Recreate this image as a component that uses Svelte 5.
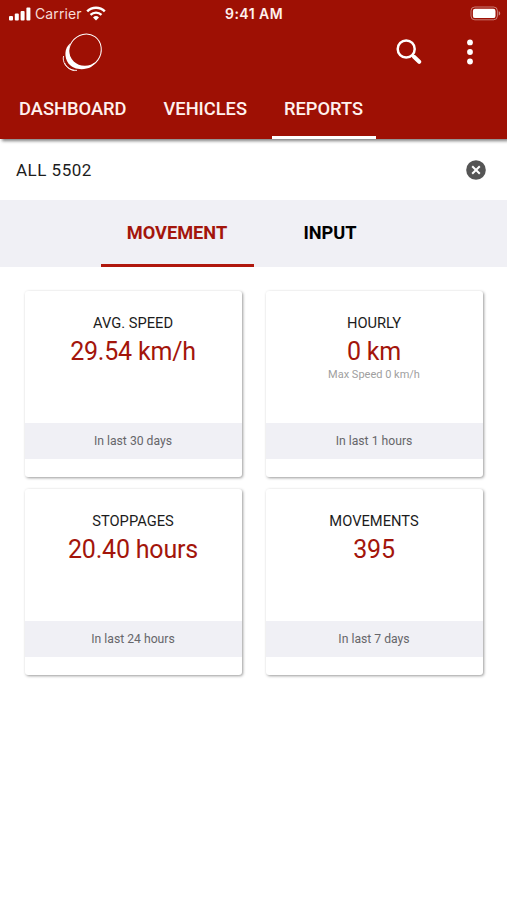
<script lang="ts">
    type Card = {
        title: string;
        value: string;
        note?: string;
        period: string;
    };

    const tabs: string[] = ['DASHBOARD', 'VEHICLES', 'REPORTS'];
    const sections: string[] = ['MOVEMENT', 'INPUT'];

    const cards: Card[] = [
        { title: 'AVG. SPEED', value: '29.54 km/h', period: 'In last 30 days' },
        { title: 'HOURLY', value: '0 km', note: 'Max Speed 0 km/h', period: 'In last 1 hours' },
        { title: 'STOPPAGES', value: '20.40 hours', period: 'In last 24 hours' },
        { title: 'MOVEMENTS', value: '395', period: 'In last 7 days' }
    ];

    let activeTab = $state('REPORTS');
    let activeSection = $state('MOVEMENT');
    let filter = $state('ALL 5502');
</script>

<div class="screen">
    <header>
        <div class="status-bar">
            <div class="carrier">
                <svg width="22" height="14" viewBox="0 0 22 14" fill="#fff">
                    <rect x="0" y="9" width="4" height="4.5" rx="1" />
                    <rect x="5.8" y="6.6" width="4" height="6.9" rx="1" />
                    <rect x="11.6" y="3.9" width="4" height="9.6" rx="1" />
                    <rect x="17.4" y="0.6" width="4" height="12.9" rx="1" />
                </svg>
                <span>Carrier</span>
                <svg width="20" height="15" viewBox="0 0 20 15" fill="none" stroke="#fff">
                    <path d="M1.2 5.4a12.6 12.6 0 0 1 17.6 0" stroke-width="2.5" />
                    <path d="M4.5 8.8a7.9 7.9 0 0 1 11 0" stroke-width="2.3" />
                    <path d="M10 14.4l-3-3a4.3 4.3 0 0 1 6 0z" fill="#fff" stroke="none" />
                </svg>
            </div>
            <span class="time">9:41 AM</span>
            <svg class="battery" width="31" height="15" viewBox="0 0 31 15">
                <rect x="1" y="1" width="26.4" height="12.8" rx="3.8" fill="none" stroke="#fff" stroke-opacity="0.45" />
                <rect x="2.9" y="2.7" width="22.6" height="9.4" rx="2.2" fill="#fff" />
                <path d="M28.7 5.2v4.4c.9-.3 1.5-1.2 1.5-2.2s-.6-1.9-1.5-2.2z" fill="#fff" fill-opacity="0.5" />
            </svg>
        </div>

        <div class="toolbar">
            <svg class="logo" width="42" height="42" viewBox="0 0 42 42">
                <path d="M9 11.5C3.5 16 2.8 25 7.5 31.5C12.5 38 23 38.500 30 35L34 31L12 10z" fill="#fff" />
                <path d="M2.6 24C1 29 5 37.5 13.5 38.6M3.6 31C5.5 35.5 10 38.6 16 38.4" fill="none" stroke="#fff" stroke-width="0.9" />
                <circle cx="23.8" cy="18" r="15.8" fill="#9e1004" />
                <ellipse cx="24" cy="18.8" rx="15.8" ry="17.2" transform="rotate(35 24 18.8)" fill="none" stroke="#fff" stroke-width="1" />
            </svg>
            <div class="actions">
                <button aria-label="Search">
                    <svg width="26" height="26" viewBox="0 0 26 26" fill="none" stroke="#fff">
                        <circle cx="10.2" cy="10" r="8.5" stroke-width="2.5" />
                        <path d="M16.2 15.8l1.6 1.6" stroke-width="2.6" />
                        <path d="M18 17.8l5.2 5" stroke-width="4" stroke-linecap="round" />
                    </svg>
                </button>
                <button aria-label="More">
                    <svg width="8" height="26" viewBox="0 0 8 26" fill="#fff">
                        <circle cx="4" cy="3.4" r="2.9" />
                        <circle cx="4" cy="13" r="2.9" />
                        <circle cx="4" cy="22.5" r="2.9" />
                    </svg>
                </button>
            </div>
        </div>

        <nav class="tabs">
            {#each tabs as tab}
                <button class:active={activeTab === tab} onclick={() => (activeTab = tab)}>{tab}</button>
            {/each}
        </nav>
    </header>

    <div class="filter">
        <span>{filter}</span>
        <button aria-label="Clear" onclick={() => (filter = '')}>
            <svg width="20" height="20" viewBox="0 0 20 20">
                <circle cx="10" cy="10" r="9.8" fill="#555" />
                <path d="M6.2 6.2l7.6 7.6M13.8 6.2l-7.6 7.6" stroke="#fff" stroke-width="2" />
            </svg>
        </button>
    </div>

    <nav class="sections">
        {#each sections as section}
            <button class:active={activeSection === section} onclick={() => (activeSection = section)}>
                {section}
            </button>
        {/each}
    </nav>

    <main>
        {#each cards as card}
            <section class="card">
                <div class="card-body">
                    <h2>{card.title}</h2>
                    <p class="value">{card.value}</p>
                    {#if card.note}
                        <p class="note">{card.note}</p>
                    {/if}
                </div>
                <p class="period">{card.period}</p>
            </section>
        {/each}
    </main>
</div>

<style>
    :global(body) {
        background-color: #ffffff;
    }

    .screen {
        width: 100%;
        height: 900px;
        overflow: hidden;
        font-family: Roboto, sans-serif;
        color: #1c1c1c;
    }

    button {
        display: flex;
        align-items: center;
        justify-content: center;
        padding: 0;
        border: none;
        background: none;
        font-family: inherit;
        cursor: pointer;
    }

    svg {
        display: block;
    }

    h2,
    p {
        margin: 0;
        font-weight: 400;
    }

    header {
        height: 139px;
        background-color: #9e1004; /* Brand red */
        box-shadow: 2px 2px 3px rgba(0, 0, 0, 0.5);
    }

    .status-bar {
        display: grid;
        grid-template-columns: 1fr auto 1fr;
        align-items: center;
        height: 27px;
        padding: 0 6px 0 9px;
        color: #ffffff;
        font-family: Inter, sans-serif;
        font-size: 14px;
    }

    .carrier {
        display: flex;
        align-items: center;
        gap: 4px;
        color: #f6dcd8;
        letter-spacing: 0.1px;
    }

    .time {
        margin-right: 2px;
        color: #fff1ee;
        font-weight: 600;
        font-size: 14px;
        letter-spacing: 0.45px;
    }

    .battery {
        justify-self: end;
    }

    .toolbar {
        display: flex;
        justify-content: space-between;
        box-sizing: border-box;
        height: 53px;
        padding: 5px 33px 0 61px;
    }

    .actions {
        display: flex;
        align-items: center;
        gap: 44px;
        height: 40px;
    }

    .tabs {
        display: flex;
        gap: 12px;
        height: 59px;
        padding-left: 6.6px;
    }

    .tabs button {
        padding: 1px 12.5px 0;
        border-bottom: 3px solid transparent;
        color: #fff1ee;
        font-size: 18.3px;
        font-weight: 500;
    }

    .tabs button.active {
        border-color: #ffffff;
    }

    .filter {
        display: flex;
        align-items: center;
        justify-content: space-between;
        height: 61px;
        padding: 0 21px 0 16px;
        font-size: 17px;
        letter-spacing: 0.5px;
    }

    .sections {
        display: flex;
        justify-content: center;
        height: 67px;
        background-color: #f0f0f5;
    }

    .sections button {
        width: 153px;
        border-bottom: 3px solid transparent;
        color: #000000;
        font-size: 18.2px;
        font-weight: 700;
    }

    .sections button.active {
        border-color: #b0180d;
        color: #a3150b;
    }

    main {
        display: grid;
        grid-template-columns: 217px 217px;
        gap: 12px 24px;
        justify-content: center;
        padding-top: 24px;
    }

    .card {
        display: flex;
        flex-direction: column;
        height: 186px;
        border-radius: 3px;
        background-color: #ffffff;
        box-shadow: 1px 1px 3px rgba(0, 0, 0, 0.4);
        text-align: center;
    }

    .card-body {
        height: 132px;
        padding-top: 22px;
        box-sizing: border-box;
    }

    h2 {
        font-size: 14.7px;
        line-height: 20px;
    }

    .value {
        color: #a3150b;
        font-size: 25px;
        line-height: 38px;
        letter-spacing: -0.2px;
    }

    .note {
        color: #a0a0a0;
        font-size: 11px;
        line-height: 8px;
    }

    .period {
        height: 36px;
        background-color: #f0f0f5;
        color: #66666a;
        font-size: 12.2px;
        line-height: 36px;
    }
</style>
